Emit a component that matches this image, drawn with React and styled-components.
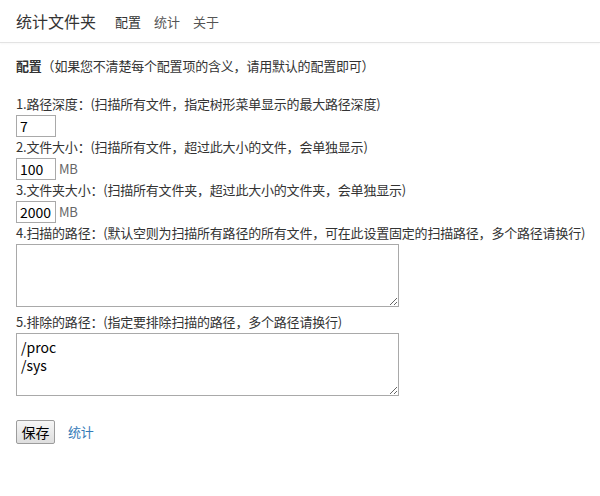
import React from 'react';
import styled, { createGlobalStyle } from 'styled-components';

const GlobalStyle = createGlobalStyle`
  body {
    margin: 0;
    background: #fff;
    font-family: "Noto Sans CJK SC", "Noto Sans", sans-serif;
    color: #333;
  }
`;

const Header = styled.header`
  display: flex;
  align-items: center;
  height: 42px;
  padding: 0 16px;
  border-bottom: 1px solid #e3e3e3;
  box-shadow: 0 1px 2px rgba(0, 0, 0, 0.03);
`;

const Brand = styled.div`
  font-size: 16px;
  color: #333;
  margin-right: 19px;
`;

const Nav = styled.nav`
  display: flex;
  gap: 13px;
`;

const NavItem = styled.span`
  font-size: 13px;
  color: ${p => (p.$active ? '#333' : '#555')};
`;

const Main = styled.main`
  padding: 13px 16px;
  font-size: 13px;
  line-height: 20px;
  letter-spacing: -0.2px;
`;

const Intro = styled.p`
  margin: 0 0 18px 0;
  b {
    font-weight: bold;
  }
`;

const Label = styled.div`
  line-height: 20px;
  white-space: nowrap;
  margin-top: ${p => p.$gap || 0}px;
`;

const Row = styled.div`
  display: flex;
  align-items: center;
  height: 22px;
  margin-top: 1px;
`;

const NumInput = styled.input`
  box-sizing: border-box;
  width: 40px;
  height: 22px;
  border: 1px solid #a9a9a9;
  padding: 0 3px;
  font-family: inherit;
  font-size: 14px;
  color: #000;
  outline: none;
`;

const Unit = styled.span`
  margin-left: 3px;
  color: #666;
  font-size: 13px;
`;

const Area = styled.textarea`
  display: block;
  box-sizing: border-box;
  width: 383px;
  height: 63px;
  margin-top: 1px;
  border: 1px solid #a9a9a9;
  padding: 4px 4px;
  font-family: inherit;
  font-size: 14px;
  line-height: 18px;
  color: #000;
  outline: none;
`;

const Actions = styled.div`
  display: flex;
  align-items: center;
  margin-top: 24px;
`;

const SaveButton = styled.button`
  box-sizing: border-box;
  width: 39px;
  height: 24px;
  padding: 0;
  font-family: inherit;
  font-size: 14px;
  color: #000;
  border: 1px solid #9c9c9c;
  border-radius: 2px;
  background: linear-gradient(#f6f6f6, #dedede);
`;

const StatLink = styled.a`
  margin-left: 13px;
  font-size: 13px;
  color: #337ab7;
  text-decoration: none;
`;

export default function App() {
  return (
    <>
      <GlobalStyle />
      <Header>
        <Brand>统计文件夹</Brand>
        <Nav>
          <NavItem $active>配置</NavItem>
          <NavItem>统计</NavItem>
          <NavItem>关于</NavItem>
        </Nav>
      </Header>
      <Main>
        <Intro><b>配置</b>（如果您不清楚每个配置项的含义，请用默认的配置即可）</Intro>

        <Label>1.路径深度：(扫描所有文件，指定树形菜单显示的最大路径深度)</Label>
        <Row><NumInput defaultValue="7" /></Row>

        <Label>2.文件大小：(扫描所有文件，超过此大小的文件，会单独显示)</Label>
        <Row><NumInput defaultValue="100" /><Unit>MB</Unit></Row>

        <Label>3.文件夹大小：(扫描所有文件夹，超过此大小的文件夹，会单独显示)</Label>
        <Row><NumInput defaultValue="2000" /><Unit>MB</Unit></Row>

        <Label>4.扫描的路径：(默认空则为扫描所有路径的所有文件，可在此设置固定的扫描路径，多个路径请换行)</Label>
        <Area defaultValue="" />

        <Label $gap={5}>5.排除的路径：(指定要排除扫描的路径，多个路径请换行)</Label>
        <Area defaultValue={'/proc\n/sys'} />

        <Actions>
          <SaveButton>保存</SaveButton>
          <StatLink href="#">统计</StatLink>
        </Actions>
      </Main>
    </>
  );
}
